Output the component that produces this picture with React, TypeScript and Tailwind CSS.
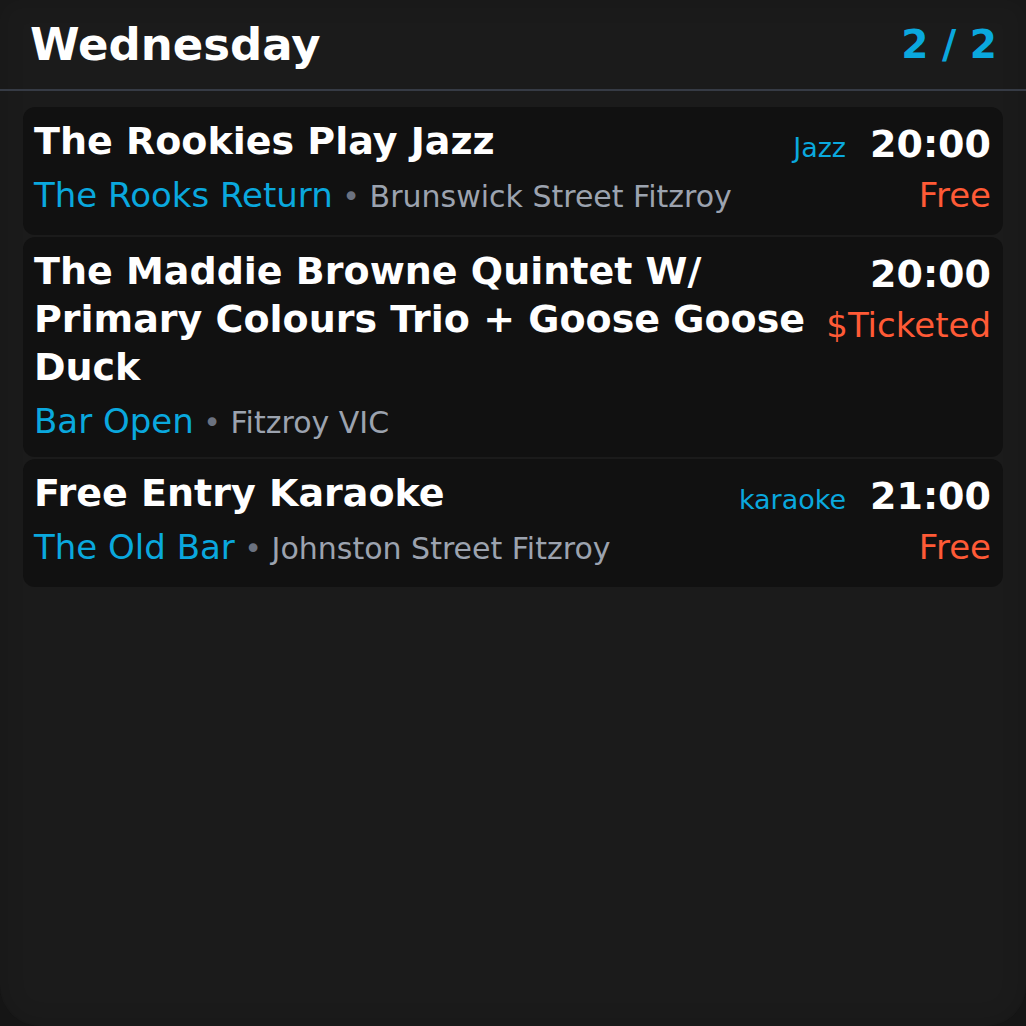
const events = [
  {
    title: "The Rookies Play Jazz",
    venue: "The Rooks Return",
    location: "Brunswick Street Fitzroy",
    genre: "Jazz",
    time: "20:00",
    price: "Free",
  },
  {
    title: "The Maddie Browne Quintet W/ Primary Colours Trio + Goose Goose Duck",
    venue: "Bar Open",
    location: "Fitzroy VIC",
    genre: "",
    time: "20:00",
    price: "$Ticketed",
  },
  {
    title: "Free Entry Karaoke",
    venue: "The Old Bar",
    location: "Johnston Street Fitzroy",
    genre: "karaoke",
    time: "21:00",
    price: "Free",
  },
];

export default function App() {
  return (
    <div className="h-screen w-full bg-[#151515] font-['DejaVu_Sans',sans-serif]">
      <div className="flex h-full flex-col rounded-b-[40px] bg-[#1b1b1b] shadow-[inset_0_0_24px_rgba(0,0,0,0.15)]">
        {/* Header */}
        <div className="flex h-[91px] items-center justify-between border-b-2 border-[#363b45] pl-[30px] pr-[29px]">
          <h1 className="text-[45px] font-bold leading-none text-white">Wednesday</h1>
          <span className="text-[39px] font-bold leading-none text-[#0aa8de]">2 / 2</span>
        </div>

        {/* Event list */}
        <div className="flex flex-col gap-[2px] px-[23px] pt-[16px]">
          {events.map((ev) => (
            <div
              key={ev.title}
              className="flex gap-4 rounded-xl bg-[#111111] pl-[11px] pr-[12px] pt-[10px] pb-[14px]"
            >
              <div className="min-w-0 flex-1">
                <div className="text-[38px] font-bold leading-[48px] text-white">{ev.title}</div>
                <div className="mt-[8px] text-[34px] leading-[44px]">
                  <span className="text-[#0aa8de]">{ev.venue}</span>
                  <span className="text-[30px] leading-none text-[#6b7280]"> • </span>
                  <span className="text-[30px] leading-none text-[#9ca3af]">{ev.location}</span>
                </div>
              </div>
              <div className="flex shrink-0 flex-col items-end pb-[2px]">
                <div className="mt-[3px] flex h-[48px] items-baseline gap-6">
                  {ev.genre && (
                    <span className="text-[27px] leading-none text-[#0aa8de]">{ev.genre}</span>
                  )}
                  <span className="text-[38px] font-bold leading-[48px] text-white">{ev.time}</span>
                </div>
                <span className="mt-[3px] text-[34px] leading-[48px] text-[#ff5a36]">{ev.price}</span>
              </div>
            </div>
          ))}
        </div>
      </div>
    </div>
  );
}
